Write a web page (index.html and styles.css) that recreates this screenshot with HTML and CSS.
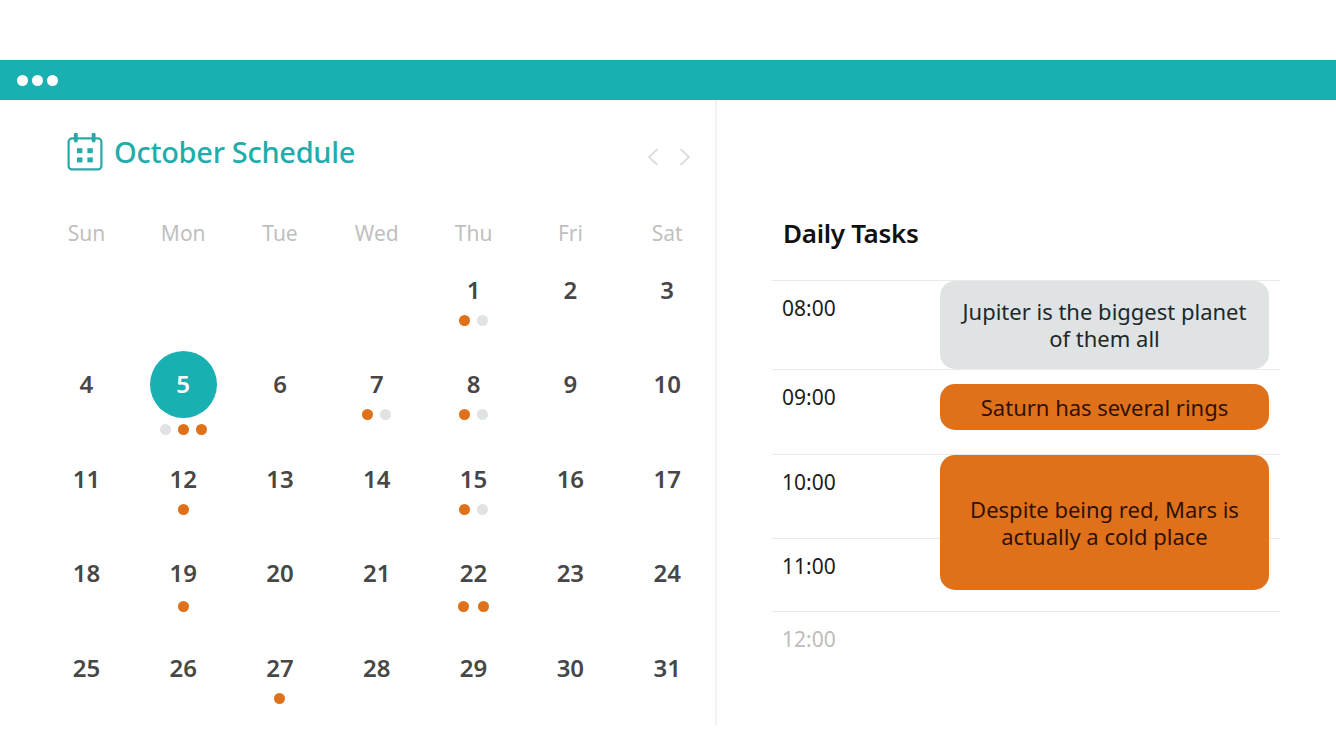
FILE: index.html
```html
<!DOCTYPE html>
<html lang="en">
<head>
<meta charset="utf-8">
<title>October Schedule</title>
<link rel="stylesheet" href="styles.css">
</head>
<body>
<div class="bar"><i></i><i></i><i></i></div>
<main class="main">
  <section class="calendar">
    <header class="cal-head">
      <svg class="cal-icon" viewBox="0 0 36 38" width="36" height="38" fill="none" stroke="#2aa9a8" stroke-width="2.2">
        <rect x="1.6" y="5.4" width="32.8" height="31" rx="3.5"/>
        <path d="M8.8 1.6v6M26.6 1.6v6" stroke-width="4" stroke-linecap="round"/>
        <g fill="#2aa9a8" stroke="none">
          <rect x="10" y="15.2" width="5.4" height="5"/><rect x="20.4" y="15.2" width="5.4" height="5"/>
          <rect x="10" y="24.4" width="5.4" height="5"/><rect x="20.4" y="24.4" width="5.4" height="5"/>
        </g>
      </svg>
      <h1>October Schedule</h1>
      <nav class="arrows">
        <svg viewBox="0 0 12 20" width="12" height="20" fill="none" stroke="#dcdcdc" stroke-width="1.8"><path d="M10.5 2 2 10l8.500 8"/></svg>
        <svg viewBox="0 0 12 20" width="12" height="20" fill="none" stroke="#dcdcdc" stroke-width="1.8"><path d="M1.500 2 10 10l-8.500 8"/></svg>
      </nav>
    </header>
    <div class="weekdays"><span>Sun</span><span>Mon</span><span>Tue</span><span>Wed</span><span>Thu</span><span>Fri</span><span>Sat</span></div>
    <div class="days">
      <div class="day"></div><div class="day"></div><div class="day"></div><div class="day"></div>
      <div class="day"><b>1</b><p class="dots"><i class="o"></i><i class="g"></i></p></div>
      <div class="day"><b>2</b></div>
      <div class="day"><b>3</b></div>

      <div class="day"><b>4</b></div>
      <div class="day today"><b>5</b><p class="dots below"><i class="g"></i><i class="o"></i><i class="o"></i></p></div>
      <div class="day"><b>6</b></div>
      <div class="day"><b>7</b><p class="dots"><i class="o"></i><i class="g"></i></p></div>
      <div class="day"><b>8</b><p class="dots"><i class="o"></i><i class="g"></i></p></div>
      <div class="day"><b>9</b></div>
      <div class="day"><b>10</b></div>

      <div class="day"><b>11</b></div>
      <div class="day"><b>12</b><p class="dots"><i class="o"></i></p></div>
      <div class="day"><b>13</b></div>
      <div class="day"><b>14</b></div>
      <div class="day"><b>15</b><p class="dots"><i class="o"></i><i class="g"></i></p></div>
      <div class="day"><b>16</b></div>
      <div class="day"><b>17</b></div>

      <div class="day"><b>18</b></div>
      <div class="day"><b>19</b><p class="dots low"><i class="o"></i></p></div>
      <div class="day"><b>20</b></div>
      <div class="day"><b>21</b></div>
      <div class="day"><b>22</b><p class="dots low wide"><i class="o"></i><i class="o"></i></p></div>
      <div class="day"><b>23</b></div>
      <div class="day"><b>24</b></div>

      <div class="day"><b>25</b></div>
      <div class="day"><b>26</b></div>
      <div class="day"><b>27</b><p class="dots"><i class="o"></i></p></div>
      <div class="day"><b>28</b></div>
      <div class="day"><b>29</b></div>
      <div class="day"><b>30</b></div>
      <div class="day"><b>31</b></div>
    </div>
  </section>
  <section class="tasks">
    <h2>Daily Tasks</h2>
    <div class="schedule">
      <div class="slot s1">08:00</div>
      <div class="slot s2">09:00</div>
      <div class="slot s3">10:00</div>
      <div class="slot s4">11:00</div>
      <div class="slot s5">12:00</div>
      <div class="task t1">Jupiter is the biggest planet<br>of them all</div>
      <div class="task t2">Saturn has several rings</div>
      <div class="task t3">Despite being red, Mars is<br>actually a cold place</div>
    </div>
  </section>
</main>
</body>
</html>
```

FILE: styles.css
```css
* { box-sizing: border-box; }
html, body { margin: 0; background: #fff; }
body {
  width: 1336px;
  height: 752px;
  overflow: hidden;
  padding-top: 60px;
  font-family: "Noto Sans", "Open Sans", sans-serif;
}
.bar {
  height: 40px;
  background: #18b0b0;
  display: flex;
  align-items: center;
  gap: 4px;
  padding: 1px 0 0 17px;
}
.bar i {
  width: 11px;
  height: 11px;
  border-radius: 50%;
  background: #fff;
}
.main { display: flex; height: 625px; }

.calendar {
  width: 717px;
  border-right: 2px solid #f1f1f1;
  padding: 32px 0 0 38px;
}
.cal-head { display: flex; align-items: center; height: 40px; padding-left: 29px; }
.cal-icon { flex: none; }
.cal-head h1 {
  margin: 0 0 0 11px;
  font-size: 29px;
  font-weight: 500;
  color: #1fadac;
  letter-spacing: -0.3px;
  line-height: 40px;
}
.arrows {
  margin-left: auto;
  margin-right: 24px;
  display: flex;
  gap: 20px;
  padding-top: 10px;
}
.weekdays {
  display: grid;
  grid-template-columns: repeat(7, 96.8px);
  margin-top: 46px;
  height: 30px;
  text-align: center;
  font-size: 21px;
  line-height: 30px;
  color: #bfbfbf;
}
.days {
  display: grid;
  grid-template-columns: repeat(7, 96.8px);
  grid-auto-rows: 94.4px;
  margin-top: 24px;
}
.day {
  position: relative;
  display: flex;
  flex-direction: column;
  align-items: center;
  text-align: center;
}
.day b {
  position: relative;
  display: block;
  height: 36px;
  font-size: 24px;
  line-height: 36px;
  font-weight: 600;
  color: #474747;
}
.today b { color: #fff; }
.today::before {
  content: "";
  position: absolute;
  left: 50%;
  top: 18px;
  width: 67px;
  height: 67px;
  margin: -33.500px 0 0 -33.500px;
  border-radius: 50%;
  background: #18b0b0;
}
.dots { display: flex; gap: 7px; margin: 7px 0 0; }
.dots.below { position: relative; margin-top: 22px; }
.dots.low { margin-top: 10px; }
.dots.wide { gap: 9px; }
.dots i { width: 11px; height: 11px; border-radius: 50%; }
.dots .o { background: #e0711b; }
.dots .g { background: #dfe3e3; }

.tasks { flex: 1; padding: 0 56px 0 55px; }
.tasks h2 {
  margin: 114px 0 0 11px;
  font-size: 26px;
  line-height: 38px;
  font-weight: 600;
  color: #111;
  letter-spacing: -0.3px;
}
.schedule {
  display: grid;
  grid-template-columns: 168px 329px 11px;
  grid-template-rows: 89px 85px 84px 73px 60px;
  margin-top: 28px;
}
.slot {
  grid-column: 1 / -1;
  border-top: 1px solid #e9ebeb;
  padding: 12px 0 0 10px;
  font-size: 21px;
  line-height: 30px;
  color: #1c1c1c;
}
.s1 { grid-row: 1; }
.s2 { grid-row: 2; }
.s3 { grid-row: 3; }
.s4 { grid-row: 4; }
.s5 { grid-row: 5; color: #bdbdbd; }
.task {
  grid-column: 2;
  display: flex;
  align-items: center;
  justify-content: center;
  text-align: center;
  border-radius: 15px;
  font-size: 22px;
  line-height: 27px;
}
.t1 { grid-row: 1; margin-top: 1px; background: #dfe3e3; color: #20282b; }
.t2 { grid-row: 2; margin: 15px 0 24px; background: #e0711b; color: #2f1204; }
.t3 { grid-row: 3 / 5; margin: 1px 0 21px; background: #e0711b; color: #2f1204; }
```
